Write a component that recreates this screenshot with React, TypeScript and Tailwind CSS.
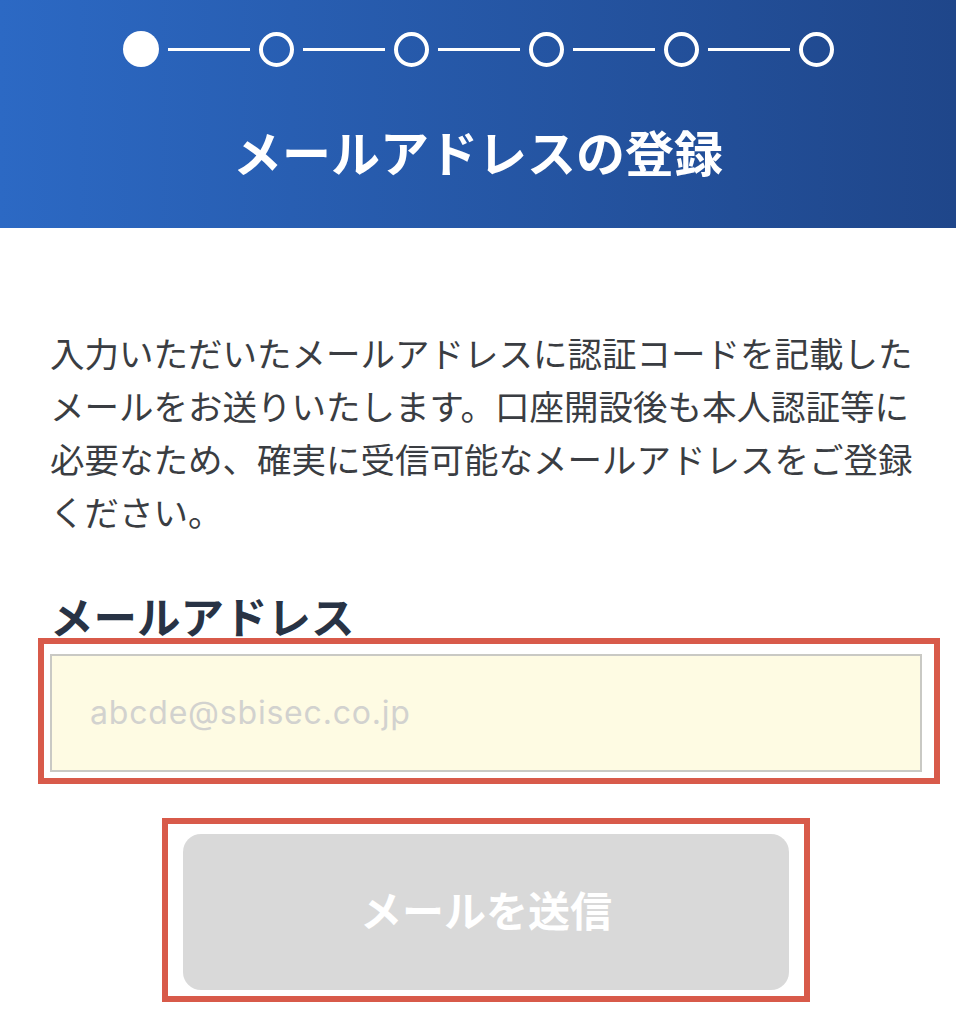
import React from "react";

const jp = { fontFamily: '"Noto Sans CJK JP", "Noto Sans", sans-serif' };

function Stepper() {
  const items = [0, 1, 2, 3, 4, 5];
  return (
    <div className="flex items-center justify-center">
      {items.map((i) => (
        <React.Fragment key={i}>
          {i > 0 && <div className="mx-[9px] h-[3px] w-[82px] bg-white" />}
          {i === 0 ? (
            <div className="h-[36px] w-[36px] rounded-full bg-white" />
          ) : (
            <div className="h-[35px] w-[35px] rounded-full border-[4px] border-white" />
          )}
        </React.Fragment>
      ))}
    </div>
  );
}

export default function App() {
  return (
    <div className="min-h-[1024px] w-[956px] bg-white" style={jp}>
      <header className="flex h-[228px] flex-col items-center bg-gradient-to-r from-[#2c69c4] to-[#1f468a] pt-[31px]">
        <Stepper />
        <h1 className="mt-[54px] text-[49px] font-bold leading-[60px] text-white">
          メールアドレスの登録
        </h1>
      </header>

      <main className="px-[50px] pt-[98px]">
        <p className="text-[34.5px] leading-[53px] text-[#3a3d42]">
          <span className="block whitespace-nowrap">入力いただいたメールアドレスに認証コードを記載した</span>
          <span className="block whitespace-nowrap">メールをお送りいたします。口座開設後も本人認証等に</span>
          <span className="block whitespace-nowrap">必要なため、確実に受信可能なメールアドレスをご登録</span>
          <span className="block whitespace-nowrap">ください。</span>
        </p>

        <h2 className="mt-[56px] text-[43.5px] font-bold leading-[44px] text-[#283345]">
          メールアドレス
        </h2>
      </main>

      <div className="ml-[38px] w-[902px] border-[6px] border-[#d85a4a] pb-[6px] pl-[6px] pr-[12px] pt-[10px]">
        <div className="flex h-[118px] items-center border-2 border-[#c9c9c4] bg-[#fefbe3] pl-[38px]">
          <span
            className="text-[32px] tracking-[0.8px] text-[#d2d2cf]"
            style={{ fontFamily: 'Inter, "Liberation Sans", sans-serif' }}
          >
            abcde@sbisec.co.jp
          </span>
        </div>
      </div>

      <div className="ml-[162px] mt-[34px] w-[648px] border-[6px] border-[#d85a4a] pb-[6px] pl-[15px] pr-[15px] pt-[10px]">
        <div className="flex h-[156px] items-center justify-center rounded-[18px] bg-[#d9d9d9] pb-[8px]">
          <span className="text-[42px] font-bold text-white">メールを送信</span>
        </div>
      </div>
    </div>
  );
}
